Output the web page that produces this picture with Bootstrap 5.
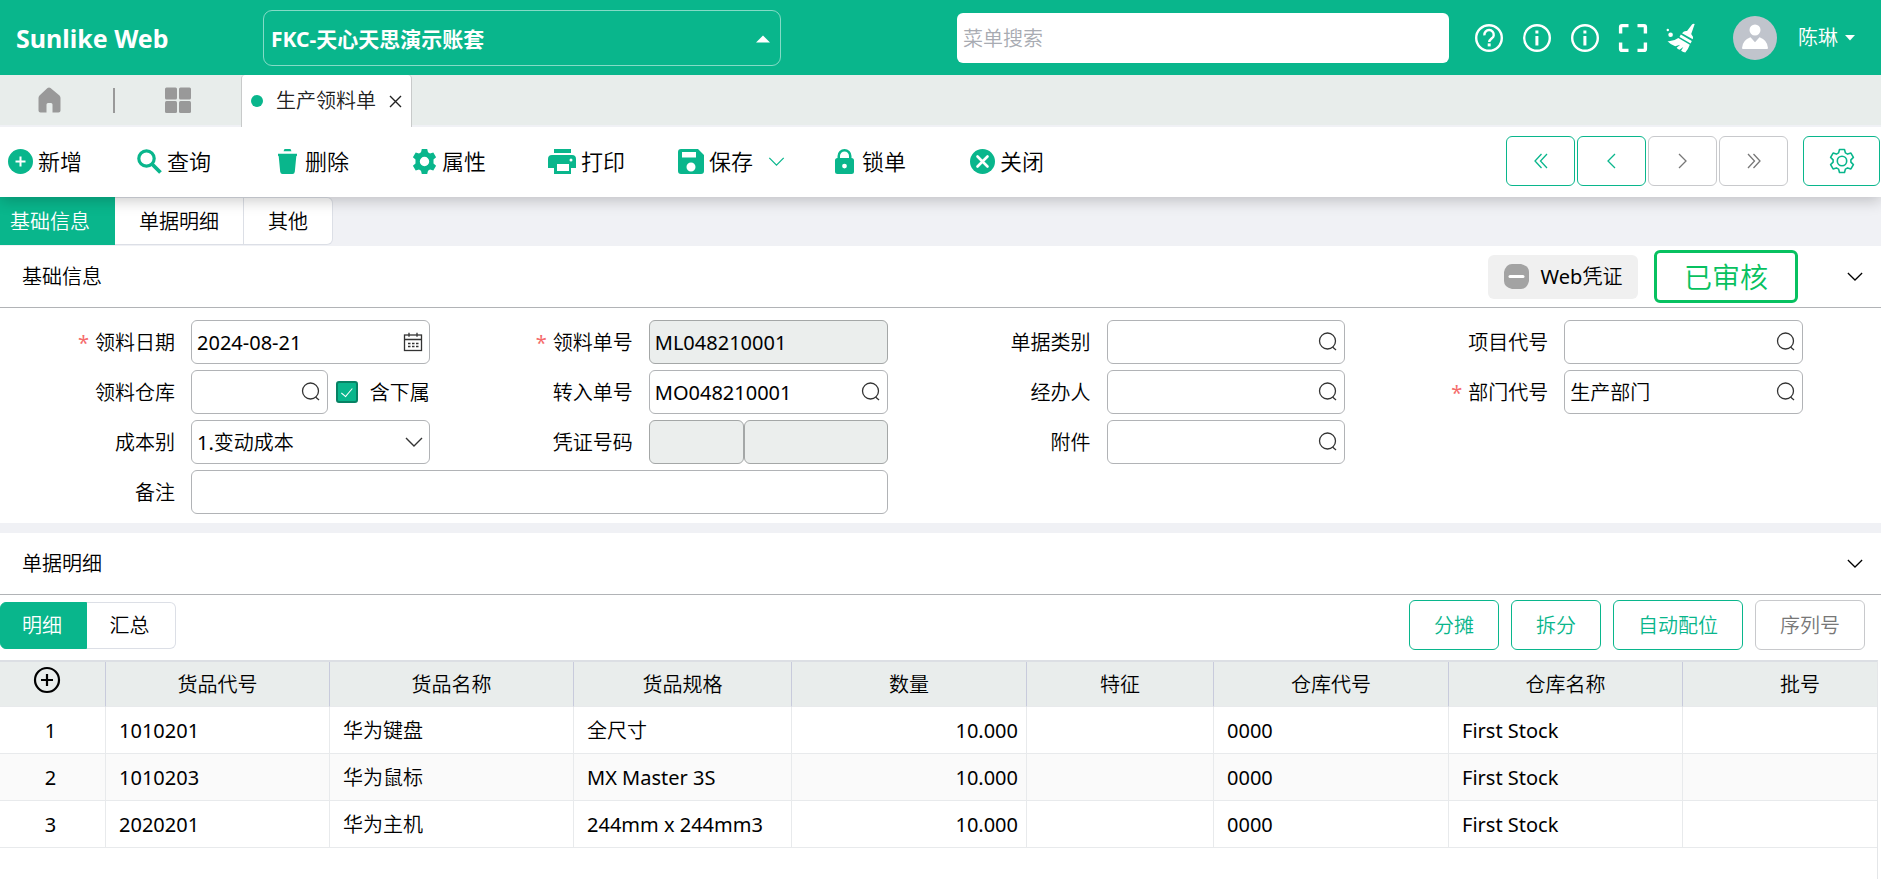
<!DOCTYPE html>
<html lang="zh-CN">
<head>
<meta charset="utf-8">
<meta name="viewport" content="width=device-width, initial-scale=1">
<title>生产领料单 - Sunlike Web</title>
<link href="https://cdn.jsdelivr.net/npm/bootstrap@5.3.0/dist/css/bootstrap.min.css" rel="stylesheet">
<style>
:root { --brand: #09b68c; --page: #f0f1f5; --bar: #e8edeb; --line: #b1b3b6; --soft: #dcdfe6; }
body { font-family: "Noto Sans", "Noto Sans CJK SC DemiLight", "Noto Sans CJK SC Light", "Noto Sans CJK SC", sans-serif; font-size: 20px; line-height: 30px; color: #000; background: #fff; }
svg { display: block; flex: none; }
button { color: inherit; }
.topbar { background: var(--brand); height: 75px; color: #fff; }
.logo { font-size: 25px; width: 263px; padding-left: 16px; }
.account { font-family: "Noto Sans", "Noto Sans CJK SC", sans-serif; width: 518px; height: 56px; border: 1px solid rgba(255,255,255,.5); border-radius: 9px; background: none; color: #fff; font-size: 21px; padding: 2px 10px 0 7px; }
.menu-search { width: 492px; height: 50px; border: 0; border-radius: 6px; padding: 2px 6px 0; font-size: 20px; }
.menu-search::placeholder { color: #a8abb2; opacity: 1; }
.quick { margin-left: 25px; gap: 18px; }
.user { margin: 0 26px 0 37px; gap: 21px; }
.user .plain { gap: 7px; }
.plain { border: 0; background: none; padding: 0; }
.tabbar { background: var(--bar); height: 52px; border-bottom: 2px solid var(--page); color: #999; padding-left: 36px; }
.bar-split { width: 2px; height: 25px; background: #999; margin: 0 50px 0 51px; }
.doc-tab { width: 171px; height: 52px; background: #fff; color: #222; border: solid #c8caca; border-width: 0 1px; border-radius: 4px 4px 0 0; padding: 0 9px; margin-left: 50px; }
.dot { width: 12px; height: 12px; border-radius: 50%; background: var(--brand); }
.tools { height: 70px; background: #fff; box-shadow: 0 4px 14px rgba(0,0,0,.2); clip-path: inset(0 0 -24px 0); padding: 0 1px 2px 8px; z-index: 2; }
.tool-list { display: grid; grid-template-columns: 129px 138px 137px 136px 130px 154px 138px auto; }
.tool-list .plain { display: flex; align-items: center; gap: 5px; font-size: 22px; white-space: nowrap; }
.tool-list svg { color: var(--brand); }
.save { gap: 15px; }
.ghost { height: 50px; background: #fff; border: 1px solid var(--brand); border-radius: 6px; color: var(--brand); display: flex; align-items: center; justify-content: center; }
.ghost:disabled { border-color: #c8c9cc; color: #777; }
.pager { gap: 2px; }
.pager .ghost { width: 69px; }
.pager .gear { width: 77px; margin-left: 13px; }
.sections { background: var(--page); height: 49px; }
.sections button { height: 48px; background: #fff; border: 1px solid var(--soft); border-left: 0; padding: 2px 24px 0; }
.sections button.on, .switch button.on { background: var(--brand); border-color: var(--brand); color: #fff; }
.sections button.on { padding: 2px 24px 0 10px; }
.sections button:last-child { border-radius: 0 6px 6px 0; }
.panel-head { height: 62px; border-bottom: 1px solid var(--line); padding: 0 18px 0 22px; }
.voucher { width: 150px; height: 44px; border-radius: 6px; background: #f0f0f0; gap: 12px; }
.stamp { width: 144px; height: 53px; border: 3px solid #07c160; border-radius: 6px; color: #07c160; font-size: 28px; margin: 0 49px 0 16px; }
.form-area { display: grid; grid-template-columns: repeat(4, 1fr); row-gap: 6px; padding: 12px 50px 9px 0; border-bottom: 10px solid var(--page); }
.cell { display: flex; align-items: center; padding-right: 28px; min-width: 0; }
.cell label { padding-top: 2px; }
.cell > .name { width: 175px; text-align: right; margin-right: 16px; flex: none; }
.wide { grid-column: 1 / span 2; }
.need::before { content: "*"; color: #f56c6c; margin-right: 6px; }
.field { display: flex; align-items: center; flex: 1 1 0; min-width: 0; height: 44px; border: 1px solid var(--line); border-radius: 6px; background: #fff; padding: 0 6px 0 5px; color: #333; }
.field input, .field select { flex: 1; min-width: 0; width: 100%; border: 0; background: none; padding: 2px 0 0; color: #000; appearance: none; outline: 0; }
.field.off { background: #ebeeed; border-color: #a4a7a7; }
.field.short { flex: 0 0 95px; }
.tick { appearance: none; width: 22px; height: 22px; border: 2px solid #078264; border-radius: 3px; background: var(--brand); margin: 0 12px 0 8px; flex: none; display: grid; place-items: center; }
.tick:checked::after { content: ""; width: 6px; height: 11px; border: solid #fff; border-width: 0 1px 1px 0; transform: rotate(40deg) translate(-1px,-1px); }
.detail-bar { height: 65px; padding: 5px 16px 10px 0; }
.switch button { height: 47px; background: #fff; border: 1px solid var(--soft); padding: 2px 3px 0 0; }
.switch button:first-child { width: 87px; border-radius: 6px 0 0 6px; }
.switch button:last-child { width: 89px; border-left: 0; border-radius: 0 6px 6px 0; }
.acts { gap: 12px; }
.acts .ghost { padding: 2px 24px 0; }
.sheet { overflow: hidden; border-top: 2px solid #dcdfe4; border-right: 1px solid #e4e6e8; margin-right: 3px; }
.goods { table-layout: fixed; width: 1918px; border-collapse: separate; border-spacing: 0; }
.goods th { background: #e9edec; height: 45px; padding: 2px 0 0; text-align: center; font-weight: inherit; border-right: 1px solid #c8cbdc; border-bottom: 1px solid #e8eaec; }
.goods td { height: 47px; padding: 2px 8px 0 13px; border-right: 1px solid #e8eaec; border-bottom: 1px solid #e8eaec; white-space: nowrap; }
.goods tbody tr:nth-child(even) td { background: #fafafa; }
.goods td:first-child { text-align: center; padding: 2px 4px 0 0; }
.goods th .plain { display: block; margin: -10px 0 0 33px; }
.c-no { width: 106px; } .c-code { width: 224px; } .c-name { width: 244px; } .c-spec { width: 218px; } .c-mark { width: 187px; } .c-std { width: 235px; } .c-store { width: 234px; }
</style>
</head>
<body class="min-vh-100 d-flex flex-column">
<svg width="0" height="0" class="position-absolute">
  <symbol id="mag" viewBox="0 0 20 20"><circle cx="9.5" cy="9" r="8" fill="none" stroke="currentColor" stroke-width="1.3"/><path d="M14.5 15l3.5 3" stroke="currentColor" stroke-width="1.3"/></symbol>
  <symbol id="down" viewBox="0 0 18 10"><path d="M1 1l8 8 8-8" fill="none" stroke="currentColor" stroke-width="1.4"/></symbol>
  <symbol id="info" viewBox="0 0 30 30"><circle cx="15" cy="15" r="12.8" fill="none" stroke="currentColor" stroke-width="2.4"/><path d="M13.4 7.6h3v3h-3zM13.4 13h3v9.5h-3z" fill="currentColor"/></symbol>
</svg>

<header class="topbar d-flex align-items-center">
  <div class="logo fw-bold flex-shrink-0">Sunlike Web</div>
  <button type="button" class="account fw-bold d-flex align-items-center justify-content-between">FKC-天心天思演示账套
    <svg width="14" height="8" viewBox="0 0 14 8"><path d="M0 7.5L7 .5l7 7z" fill="currentColor"/></svg>
  </button>
  <input class="menu-search ms-auto" type="search" placeholder="菜单搜索" aria-label="菜单搜索">
  <div class="quick d-flex align-items-center">
    <button type="button" class="plain" aria-label="帮助"><svg width="30" height="30" viewBox="0 0 30 30" fill="none" stroke="currentColor"><circle cx="15" cy="15" r="12.8" stroke-width="2.4"/><path d="M10.4 12.3a4.7 4.7 0 119.3.2c0 2.8-4.5 3.4-4.5 6.6" stroke-width="2.4"/><path d="M13.7 20.4h3v3h-3z" fill="currentColor" stroke="none"/></svg></button>
    <button type="button" class="plain" aria-label="信息"><svg width="30" height="30"><use href="#info"/></svg></button>
    <button type="button" class="plain" aria-label="关于"><svg width="30" height="30"><use href="#info"/></svg></button>
    <button type="button" class="plain" aria-label="全屏"><svg width="30" height="30" viewBox="0 0 30 30" fill="none" stroke="currentColor" stroke-width="3.4"><path d="M2.6 10.5V4q0-1.400 1.400-1.400H10.500M19.500 2.600H26q1.400 0 1.400 1.400V10.500M27.400 19.500V26q0 1.400-1.400 1.400H19.500M10.500 27.400H4q-1.400 0-1.400-1.400V19.500"/></svg></button>
    <button type="button" class="plain" aria-label="清理"><svg width="30" height="30" viewBox="0 0 30 30" fill="currentColor"><path d="M26 1.500q1.200-1.300 2.700-.4L25.200 11q2.600 2.800 1.600 5.300L16 10.300q2.300-2.900 5-2.300zM14.800 11.500l11 6.500-1.200 2.600L13.500 14zM12.300 15l11.500 6.700q-2 5.500-4.500 7.800-2-.4-4.200-1.800l2.200-3.600-3.800 2.700q-1.700-.8-2.900-2.100l3.600-3-5 1.600Q4.500 21.500 1.500 18.200q6 .5 10.800-3.200z"/><circle cx="4.600" cy="11.800" r="2.300"/><circle cx="1.800" cy="7" r="1.200"/></svg></button>
  </div>
  <div class="user d-flex align-items-center">
    <svg width="44" height="44" viewBox="0 0 44 44"><circle cx="22" cy="22" r="22" fill="#c0c4cc"/><circle cx="22" cy="14" r="5.500" fill="#fff"/><path d="M9 32q.5-8 8.500-10.800l4.500 5 4.500-5Q34.500 24 35 32q0 1-1 1H10q-1 0-1-1z" fill="#fff"/></svg>
    <button type="button" class="plain d-flex align-items-center">陈琳<svg width="10" height="6" viewBox="0 0 10 6"><path d="M0 0h10L5 5.500z" fill="currentColor"/></svg></button>
  </div>
</header>

<nav class="tabbar d-flex align-items-center flex-shrink-0">
  <button type="button" class="plain" aria-label="首页"><svg width="26" height="26" viewBox="0 0 26 26"><path d="M13 .5q.7 0 1.500.6l9 7.400q1 1 1 2.500v12.500q0 2-2 2h-6V17.500q0-1.500-1.500-1.500h-3q-1.500 0-1.500 1.500v8h-6q-2 0-2-2V11q0-1.500 1-2.500l8-7.400q.8-.6 1.500-.6z" fill="currentColor"/></svg></button>
  <span class="bar-split"></span>
  <button type="button" class="plain" aria-label="应用"><svg width="26" height="26" viewBox="0 0 26 26" fill="currentColor"><rect width="12" height="12" y=".5" rx="1.500"/><rect x="14" y=".5" width="12" height="12" rx="1.500"/><rect y="14" width="12" height="12" rx="1.500"/><rect x="14" y="14" width="12" height="12" rx="1.500"/></svg></button>
  <div class="doc-tab d-flex align-items-center justify-content-between align-self-start"><span class="dot"></span>生产领料单
    <button type="button" class="plain" aria-label="关闭标签"><svg width="13" height="13" viewBox="0 0 13 13"><path d="M1 1l11 11M12 1L1 12" stroke="currentColor" stroke-width="1.400"/></svg></button>
  </div>
</nav>

<div class="tools d-flex align-items-center justify-content-between position-relative flex-shrink-0">
  <div class="tool-list">
    <button type="button" class="plain"><svg width="25" height="25" viewBox="0 0 25 25"><circle cx="12.500" cy="12.500" r="12.500" fill="currentColor"/><path d="M12.500 7.500v10M7.500 12.500h10" stroke="#fff" stroke-width="2"/></svg>新增</button>
    <button type="button" class="plain"><svg width="25" height="25" viewBox="0 0 25 25" fill="none" stroke="currentColor"><circle cx="9.500" cy="9.500" r="7.700" stroke-width="3.200"/><path d="M14.500 14.500l9 9" stroke-width="3.800"/></svg>查询</button>
    <button type="button" class="plain"><svg width="25" height="25" viewBox="0 0 25 25" fill="currentColor"><path d="M9.500 0h6l1 2.300h-8zM3 4.800h19v1.700q-.2.800-.7.800L19.800 22.800q-.3 2.200-2.300 2.200h-10q-2 0-2.300-2.200L3.700 7.300Q3.200 7.300 3 6.500z"/></svg>删除</button>
    <button type="button" class="plain"><svg width="25" height="25" viewBox="0 0 25 25"><path fill="currentColor" fill-rule="evenodd" d="M9.800 0h5.400l.8 3.300 2 1.200 3.300-1 2.800 4.700-2.600 2.400v3.800l2.600 2.400-2.800 4.700-3.300-1-2 1.200-.8 3.300H9.800L9 21.700l-2-1.200-3.300 1L.9 16.800l2.600-2.400v-3.800L.9 8.200l2.800-4.700 3.300 1 2-1.200zM12.500 7.800a4.700 4.700 0 100 9.400 4.700 4.700 0 000-9.400z"/></svg>属性</button>
    <button type="button" class="plain"><svg width="28" height="25" viewBox="0 0 28 25"><path fill="currentColor" fill-rule="evenodd" d="M6 0h17v4H6zM4 6h20q4 0 4 4v9h-5v6H6v-6H0v-9q0-4 4-4zM9 15v7h12v-7zM23 9.500a1.500 1.500 0 100 3 1.500 1.500 0 000-3z"/></svg>打印</button>
    <div class="save d-flex align-items-center"><button type="button" class="plain"><svg width="26" height="25" viewBox="0 0 26 25"><path fill="currentColor" fill-rule="evenodd" d="M3 0h17l6 6v16q0 3-3 3H3q-3 0-3-3V3q0-3 3-3zM4 3v5.500h14V3zM13 13.500a4.500 4.500 0 100 9 4.500 4.500 0 000-9z"/></svg>保存</button>
      <button type="button" class="plain" aria-label="更多保存"><svg width="17" height="9"><use href="#down"/></svg></button></div>
    <button type="button" class="plain"><svg width="25" height="25" viewBox="0 0 25 25"><path fill="currentColor" fill-rule="evenodd" d="M5.500 9V7a7 7 0 0114 0v2q2.500 0 2.500 2.500v11q0 2.500-2.500 2.500h-14Q3 25 3 22.500v-11Q3 9 5.500 9zM8 9h9V7A4.500 4.500 0 008 7zM12.500 14.700a2.400 2.400 0 100 4.800 2.400 2.400 0 000-4.800z"/></svg>锁单</button>
    <button type="button" class="plain"><svg width="25" height="25" viewBox="0 0 25 25"><circle cx="12.500" cy="12.500" r="12.500" fill="currentColor"/><path d="M7.500 7.500l10 10M17.500 7.500l-10 10" stroke="#fff" stroke-width="2.600" stroke-linecap="round"/></svg>关闭</button>
  </div>
  <div class="pager d-flex">
    <button type="button" class="ghost" aria-label="首张"><svg width="14" height="16" viewBox="0 0 14 16" fill="none" stroke="currentColor" stroke-width="1.300"><path d="M7.500 1L1 8l6.500 7M13 1L6.500 8l6.500 7"/></svg></button>
    <button type="button" class="ghost" aria-label="上一张"><svg width="9" height="16" viewBox="0 0 9 16" fill="none" stroke="currentColor" stroke-width="1.300"><path d="M8 1L1 8l7 7"/></svg></button>
    <button type="button" class="ghost" disabled aria-label="下一张"><svg width="9" height="16" viewBox="0 0 9 16" fill="none" stroke="currentColor" stroke-width="1.300"><path d="M1 1l7 7-7 7"/></svg></button>
    <button type="button" class="ghost" disabled aria-label="末张"><svg width="14" height="16" viewBox="0 0 14 16" fill="none" stroke="currentColor" stroke-width="1.300"><path d="M1 1l6.500 7L1 15M6.500 1L13 8l-6.500 7"/></svg></button>
    <button type="button" class="ghost gear" aria-label="设置"><svg width="26" height="26" viewBox="0 0 26 26" fill="none" stroke="currentColor" stroke-width="1.600" stroke-linejoin="round"><path d="M10.500 1.500h5l.9 3.400 2.200 1.200 3.300-1 2.500 4.300-2.500 2.400v2.400l2.500 2.400-2.500 4.300-3.300-1-2.200 1.200-.9 3.400h-5l-.9-3.400-2.200-1.200-3.300 1-2.500-4.300 2.500-2.400v-2.400L1.600 9.400l2.500-4.300 3.300 1 2.200-1.200z"/><circle cx="13" cy="13" r="4.700"/></svg></button>
  </div>
</div>

<div class="sections d-flex flex-shrink-0">
  <button type="button" class="on">基础信息</button>
  <button type="button">单据明细</button>
  <button type="button">其他</button>
</div>

<section>
  <div class="panel-head d-flex align-items-center">
    <span class="me-auto">基础信息</span>
    <button type="button" class="plain voucher d-flex align-items-center justify-content-center"><svg width="25" height="25" viewBox="0 0 25 25"><path d="M8 0h9q8 2 8 8v9q-2 8-8 8H8q-8-2-8-8V8q2-8 8-8z" fill="#a3a3a3"/><path d="M6 12.500h13" stroke="#fff" stroke-width="3" stroke-linecap="round"/></svg>Web凭证</button>
    <span class="stamp d-flex align-items-center justify-content-center">已审核</span>
    <button type="button" class="plain" aria-label="收起基础信息"><svg width="16" height="9"><use href="#down"/></svg></button>
  </div>
  <form class="form-area">
    <div class="cell"><label class="name need" for="f1">领料日期</label><div class="field"><input id="f1" type="text" value="2024-08-21"><svg width="20" height="20" viewBox="0 0 20 20" fill="none" stroke="currentColor" stroke-width="1.300"><rect x="1.500" y="3" width="17" height="15.500"/><path d="M1.500 7.500h17M6 .8v4M14 .8v4M5 11.500h2.500M9 11.500h2.500M13 11.500h2.500M5 14.500h2.500M9 14.500h2.500M13 14.500h2.500"/></svg></div></div>
    <div class="cell"><label class="name need" for="f2">领料单号</label><div class="field off"><input id="f2" type="text" value="ML048210001" readonly></div></div>
    <div class="cell"><label class="name" for="f3">单据类别</label><div class="field"><input id="f3" type="text"><svg width="20" height="20"><use href="#mag"/></svg></div></div>
    <div class="cell"><label class="name" for="f4">项目代号</label><div class="field"><input id="f4" type="text"><svg width="20" height="20"><use href="#mag"/></svg></div></div>

    <div class="cell"><label class="name" for="f5">领料仓库</label><div class="field"><input id="f5" type="text"><svg width="20" height="20"><use href="#mag"/></svg></div><input class="tick" id="f6" type="checkbox" checked><label for="f6">含下属</label></div>
    <div class="cell"><label class="name" for="f7">转入单号</label><div class="field"><input id="f7" type="text" value="MO048210001"><svg width="20" height="20"><use href="#mag"/></svg></div></div>
    <div class="cell"><label class="name" for="f8">经办人</label><div class="field"><input id="f8" type="text"><svg width="20" height="20"><use href="#mag"/></svg></div></div>
    <div class="cell"><label class="name need" for="f9">部门代号</label><div class="field"><input id="f9" type="text" value="生产部门"><svg width="20" height="20"><use href="#mag"/></svg></div></div>

    <div class="cell"><label class="name" for="f10">成本别</label><div class="field"><select id="f10"><option>1.变动成本</option></select><svg width="18" height="10"><use href="#down"/></svg></div></div>
    <div class="cell"><label class="name" for="f11">凭证号码</label><div class="field off short"><input id="f11" type="text" readonly></div><div class="field off"><input type="text" readonly aria-label="凭证号码"></div></div>
    <div class="cell"><label class="name" for="f12">附件</label><div class="field"><input id="f12" type="text"><svg width="20" height="20"><use href="#mag"/></svg></div></div>

    <div class="cell wide"><label class="name" for="f13">备注</label><div class="field"><input id="f13" type="text"></div></div>
  </form>
</section>

<section class="flex-grow-1 d-flex flex-column">
  <div class="panel-head d-flex align-items-center justify-content-between">单据明细
    <button type="button" class="plain" aria-label="收起单据明细"><svg width="16" height="9"><use href="#down"/></svg></button>
  </div>
  <div class="detail-bar d-flex align-items-center justify-content-between">
    <div class="switch d-flex"><button type="button" class="on">明细</button><button type="button">汇总</button></div>
    <div class="acts d-flex">
      <button type="button" class="ghost">分摊</button><button type="button" class="ghost">拆分</button><button type="button" class="ghost">自动配位</button><button type="button" class="ghost" disabled>序列号</button>
    </div>
  </div>
  <div class="sheet flex-grow-1">
    <table class="goods">
      <colgroup><col class="c-no"><col class="c-code"><col class="c-name"><col class="c-spec"><col class="c-std"><col class="c-mark"><col class="c-std"><col class="c-store"><col class="c-std"></colgroup>
      <thead><tr><th><button type="button" class="plain" aria-label="新增行"><svg width="28" height="28" viewBox="0 0 28 28" fill="none" stroke="currentColor" stroke-width="2.200"><circle cx="14" cy="14" r="12"/><path d="M14 8v12M8 14h12"/></svg></button></th><th>货品代号</th><th>货品名称</th><th>货品规格</th><th>数量</th><th>特征</th><th>仓库代号</th><th>仓库名称</th><th>批号</th></tr></thead>
      <tbody>
        <tr><td>1</td><td>1010201</td><td>华为键盘</td><td>全尺寸</td><td class="text-end">10.000</td><td></td><td>0000</td><td>First Stock</td><td></td></tr>
        <tr><td>2</td><td>1010203</td><td>华为鼠标</td><td>MX Master 3S</td><td class="text-end">10.000</td><td></td><td>0000</td><td>First Stock</td><td></td></tr>
        <tr><td>3</td><td>2020201</td><td>华为主机</td><td>244mm x 244mm3</td><td class="text-end">10.000</td><td></td><td>0000</td><td>First Stock</td><td></td></tr>
      </tbody>
    </table>
  </div>
</section>
<script src="https://cdn.jsdelivr.net/npm/bootstrap@5.3.0/dist/js/bootstrap.bundle.min.js"></script>
</body>
</html>
